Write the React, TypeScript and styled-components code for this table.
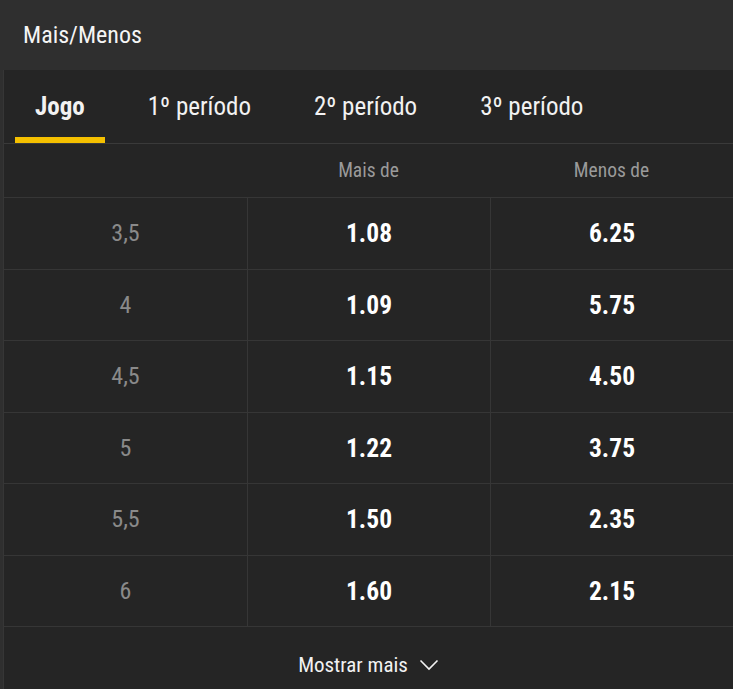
import styled, { createGlobalStyle } from "styled-components";

// ------ data ------
const tabs = ["Jogo", "1º período", "2º período", "3º período"];

const rows = [
  { line: "3,5", over: "1.08", under: "6.25" },
  { line: "4", over: "1.09", under: "5.75" },
  { line: "4,5", over: "1.15", under: "4.50" },
  { line: "5", over: "1.22", under: "3.75" },
  { line: "5,5", over: "1.50", under: "2.35" },
  { line: "6", over: "1.60", under: "2.15" },
];

const ChevronDown = () => (
  <svg width="20" height="12" viewBox="0 0 20 12" fill="none">
    <path d="M1.5 1.5 L10 10 L18.5 1.5" stroke="#f2f2f2" strokeWidth="1.6" />
  </svg>
);

function App() {
  return (
    <>
      <GlobalStyle />
      <Panel>
        <Header>Mais/Menos</Header>
        <Body>
          {/* ------ period tabs ------ */}
          <TabBar>
            {tabs.map((tab, i) => (
              <Tab key={tab} $active={i === 0}>
                {tab}
              </Tab>
            ))}
          </TabBar>

          {/* ------ odds table ------ */}
          <HeadRow>
            <span />
            <HeadCell>Mais de</HeadCell>
            <HeadCell>Menos de</HeadCell>
          </HeadRow>
          {rows.map((row) => (
            <Row key={row.line}>
              <LineCell>{row.line}</LineCell>
              <OddCell>{row.over}</OddCell>
              <OddCell>{row.under}</OddCell>
            </Row>
          ))}

          <More>
            Mostrar mais
            <ChevronDown />
          </More>
        </Body>
      </Panel>
    </>
  );
}

export default App;

// ------ component styles -------
const GlobalStyle = createGlobalStyle`
  body {
    margin: 0;
    background: #252525;
    font-family: "Roboto Condensed", "Liberation Sans Narrow", "DejaVu Sans Condensed", Roboto, sans-serif;
  }
`;

const Panel = styled.div`
  width: 733px;
  height: 689px;
  background: #2f2f2f;
  display: flex;
  flex-direction: column;
  overflow: hidden;
`;

const Header = styled.div`
  height: 70px;
  flex-shrink: 0;
  display: flex;
  align-items: center;
  padding-left: 23px;
  font-size: 24px;
  color: #f5f5f5;
`;

const Body = styled.div`
  flex: 1;
  margin-left: 3px;
  background: #252525;
  border-left: 1px solid #363636;
  display: flex;
  flex-direction: column;
`;

const TabBar = styled.div`
  height: 73px;
  display: flex;
  gap: 23px;
  padding-left: 11px;
  border-bottom: 1px solid #3a3a3a;
`;

const Tab = styled.div<{ $active?: boolean }>`
  display: flex;
  align-items: center;
  padding: 6px 20px 0;
  font-size: 25px;
  font-weight: ${(p) => (p.$active ? 700 : 400)};
  color: #f2f2f2;
  border-bottom: 6px solid ${(p) => (p.$active ? "#f5c000" : "transparent")};
`;

const HeadRow = styled.div`
  height: 53px;
  display: grid;
  grid-template-columns: 1fr 1fr 1fr;
  align-items: center;
`;

const HeadCell = styled.span`
  text-align: center;
  font-size: 19.5px;
  color: #9a9a9a;
`;

const Row = styled.div`
  height: 71.5px;
  box-sizing: border-box;
  display: grid;
  grid-template-columns: 1fr 1fr 1fr;
  border-top: 1px solid #363636;
`;

const Cell = styled.div`
  display: flex;
  align-items: center;
  justify-content: center;
  & + & {
    border-left: 1px solid #363636;
  }
`;

const LineCell = styled(Cell)`
  font-size: 24px;
  color: #8a8a8a;
`;

const OddCell = styled(Cell)`
  font-size: 25.5px;
  color: #ffffff;
  font-weight: 700;
`;

const More = styled.div`
  flex: 1;
  border-top: 1px solid #363636;
  display: flex;
  align-items: center;
  justify-content: center;
  gap: 11px;
  font-size: 21px;
  color: #f2f2f2;
  padding-top: 13px;
`;
